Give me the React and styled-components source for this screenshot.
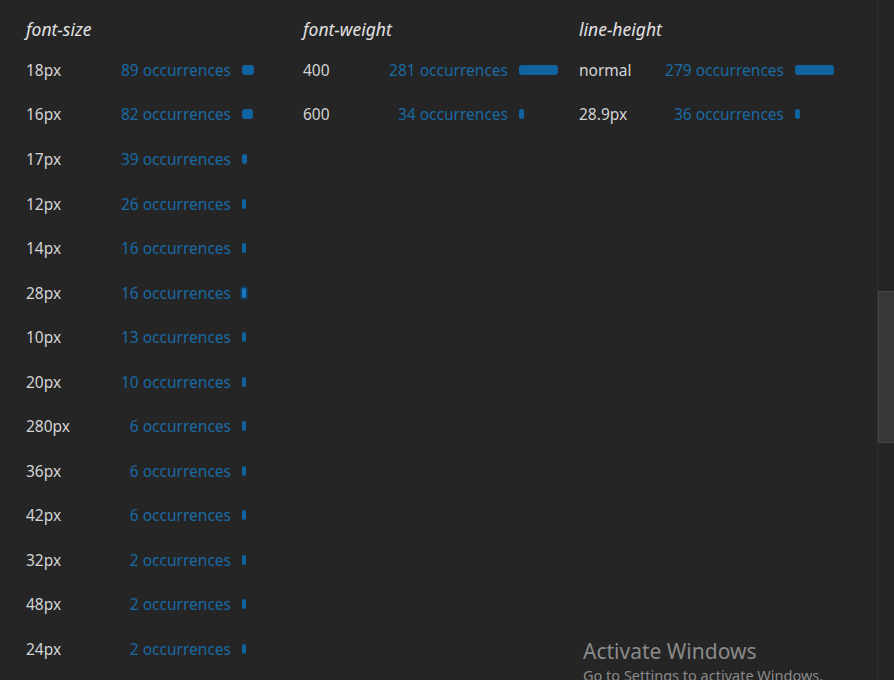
import styled, { createGlobalStyle } from 'styled-components';

/** data **/
const COLUMNS = [
  {
    title: 'font-size',
    rows: [
      ['18px', 89], ['16px', 82], ['17px', 39], ['12px', 26], ['14px', 16],
      ['28px', 16, true], ['10px', 13], ['20px', 10], ['280px', 6], ['36px', 6],
      ['42px', 6], ['32px', 2], ['48px', 2], ['24px', 2]
    ]
  },
  {
    title: 'font-weight',
    rows: [['400', 281], ['600', 34]]
  },
  {
    title: 'line-height',
    rows: [['normal', 279], ['28.9px', 36]]
  }
];

const barWidth = (count) => Math.max(4, Math.round(count * 0.139));

const GlobalStyle = createGlobalStyle`
  html, body {
    margin: 0;
    padding: 0;
    background: #252526;
    overflow: hidden;
  }
  body {
    font-family: "Noto Sans", "Open Sans", sans-serif;
  }
`;

function App() {
  return (
    <>
      <GlobalStyle />
      <StyledPage>
        <StyledPanel>
          {COLUMNS.map((col) => (
            <StyledColumn key={col.title}>
              <StyledHeading>{col.title}</StyledHeading>
              {col.rows.map(([value, count, focused]) => (
                <StyledRow key={value}>
                  <StyledInfo>
                    <StyledValue>{value}</StyledValue>
                    <StyledCount>{count} occurrences</StyledCount>
                  </StyledInfo>
                  <StyledBar $focused={focused} style={{ width: barWidth(count) }} />
                </StyledRow>
              ))}
            </StyledColumn>
          ))}
        </StyledPanel>
        <StyledTrack>
          <StyledThumb />
        </StyledTrack>
        <StyledWatermark>
          <div className="title">Activate Windows</div>
          <div className="sub">Go to Settings to activate Windows.</div>
        </StyledWatermark>
      </StyledPage>
    </>
  );
}

const StyledPage = styled.div`
  position: relative;
  display: flex;
  width: 894px;
  height: 680px;
  background: #252526;
  overflow: hidden;
`;

const StyledPanel = styled.div`
  flex: 1 1 auto;
  display: grid;
  grid-template-columns: 277px 276px 277px;
  align-content: start;
  padding: 18px 0 0 26px;
`;

const StyledColumn = styled.div`
  display: flex;
  flex-direction: column;
`;

const StyledHeading = styled.div`
  font-style: italic;
  font-size: 17.5px;
  line-height: 22px;
  color: #e2e2e2;
  margin-bottom: 7.7px;
`;

const StyledRow = styled.div`
  display: flex;
  align-items: center;
  height: 44.54px;
`;

const StyledInfo = styled.div`
  display: flex;
  justify-content: space-between;
  align-items: center;
  width: 205px;
  font-size: 15.5px;
`;

const StyledValue = styled.span`
  color: #d4d4d4;
`;

const StyledCount = styled.span`
  color: #1a6aa3;
`;

const StyledBar = styled.div`
  margin-left: 11px;
  height: 10px;
  border-radius: 3px;
  background: ${({ $focused }) => ($focused ? '#1a78c4' : '#0f64a0')};
  box-shadow: ${({ $focused }) => ($focused ? '0 0 0 2px #123a5c' : 'none')};
`;

const StyledTrack = styled.div`
  flex: 0 0 16px;
  border-left: 1px solid #2e2e2e;
  display: flex;
  flex-direction: column;
`;

const StyledThumb = styled.div`
  margin-top: 291px;
  height: 150px;
  background: #383838;
  border: 1px solid #444;
  border-right: none;
`;

const StyledWatermark = styled.div`
  position: absolute;
  left: 583px;
  top: 636px;
  color: #8a8a8a;
  font-family: "Noto Sans", "Open Sans", sans-serif;
  white-space: nowrap;
  .title {
    font-size: 21px;
    line-height: 30px;
  }
  .sub {
    font-size: 14.5px;
    line-height: 18px;
  }
`;

export default App;
